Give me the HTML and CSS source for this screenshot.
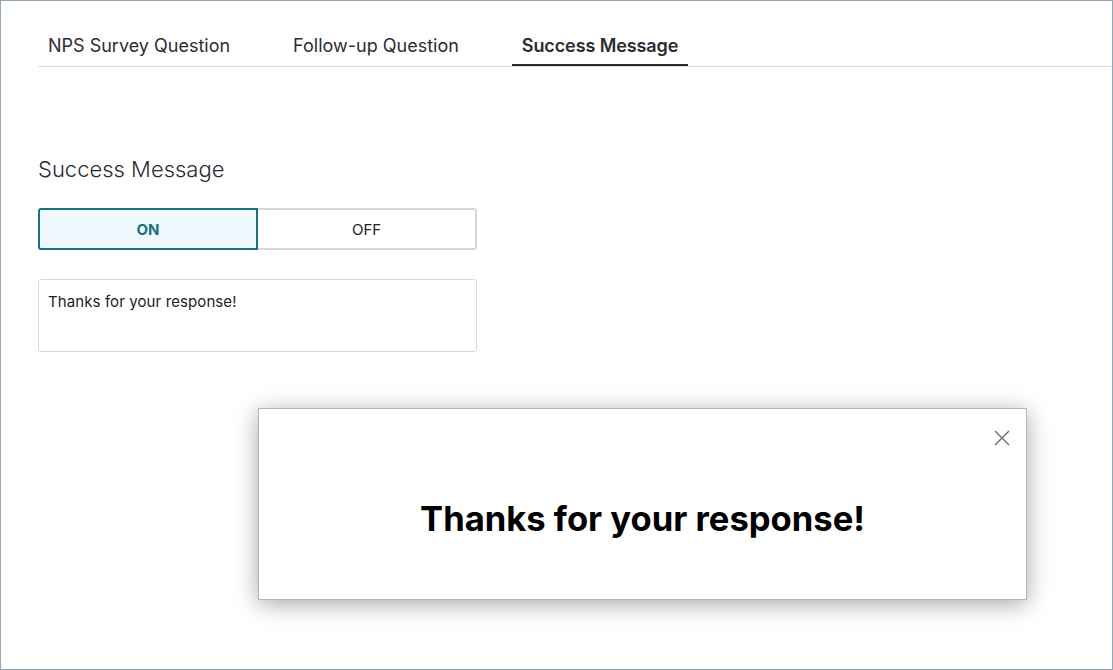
FILE: index.html
```html
<!DOCTYPE html>
<html lang="en">
<head>
    <meta charset="UTF-8">
    <meta name="viewport" content="width=device-width, initial-scale=1.0">
    <title>Success Message</title>
    <link rel="stylesheet" href="styles.css">
</head>
<body>
    <div class="frame">
        <div class="tabs">
            <div class="tab">NPS Survey Question</div>
            <div class="tab">Follow-up Question</div>
            <div class="tab active">Success Message</div>
        </div>

        <div class="section">
            <h2 class="section-title">Success Message</h2>
            <div class="toggle">
                <button class="toggle-btn on">ON</button>
                <button class="toggle-btn off">OFF</button>
            </div>
            <textarea class="message-input">Thanks for your response!</textarea>
        </div>

        <!-- preview of the message shown to the user -->
        <div class="preview">
            <button class="close-btn" aria-label="Close">
                <svg width="18" height="18" viewBox="0 0 18 18">
                    <path d="M2 2 L16 16 M16 2 L2 16" stroke="#6b6b6b" stroke-width="1.4" fill="none"/>
                </svg>
            </button>
            <p class="preview-text">Thanks for your response!</p>
        </div>
    </div>
</body>
</html>
```

FILE: styles.css
```css
body {
    margin: 0;
    font-family: Inter, "Noto Sans", sans-serif;
    color: #2b2d31;
    background: #fff;
}
.frame {
    position: relative;
    height: 670px;
    box-sizing: border-box;
    border: 1px solid #93a6b3;
    padding-left: 37px;
}
.tabs {
    display: flex;
    gap: 43px;
    margin-top: 27px;
    border-bottom: 1px solid #d9dbde;
}
.tab {
    padding: 8px 10px 8px;
    font-size: 18px;
    line-height: 20px;
    color: #2b2d31;
    border-bottom: 2px solid transparent;
}
.tab.active {
    font-weight: 600;
    letter-spacing: -0.1px;
    border-bottom-color: #2a2d33;
}
.section {
    width: 439px;
    padding-top: 89px;
}
.section-title {
    margin: 0 0 26px;
    font-size: 22px;
    line-height: 26px;
    font-weight: 300;
    color: #2b2d31;
}
.toggle {
    display: flex;
    height: 42px;
}
.toggle-btn {
    flex: 1;
    font-family: inherit;
    font-size: 15px;
    background: #fff;
    color: #222;
    border: 2px solid #d4d6da;
    border-left: none;
    border-radius: 0 3px 3px 0;
}
.toggle-btn.on {
    flex: 0 0 220px;
    font-weight: 700;
    color: #1f6f80;
    background: #eef8fd;
    border: 2px solid #1f6f80;
    border-radius: 3px 0 0 3px;
}
.message-input {
    display: block;
    box-sizing: border-box;
    width: 439px;
    height: 73px;
    margin-top: 29px;
    padding: 12px 9px;
    font-family: inherit;
    font-size: 15px;
    letter-spacing: 0.1px;
    color: #222;
    border: 1px solid #d9d9d9;
    border-radius: 3px;
    resize: none;
}
.preview {
    position: absolute;
    left: 257px;
    top: 407px;
    width: 769px;
    height: 192px;
    box-sizing: border-box;
    border: 1px solid #b5b5b5;
    background: #fff;
    box-shadow: 0 4px 22px rgba(0, 0, 0, 0.35);
    display: flex;
    align-items: center;
    justify-content: center;
}
.close-btn {
    position: absolute;
    top: 20px;
    right: 15px;
    padding: 0;
    border: none;
    background: none;
}
.preview-text {
    margin: 28px 0 0;
    font-size: 34.6px;
    font-weight: 700;
    color: #000;
}
```
